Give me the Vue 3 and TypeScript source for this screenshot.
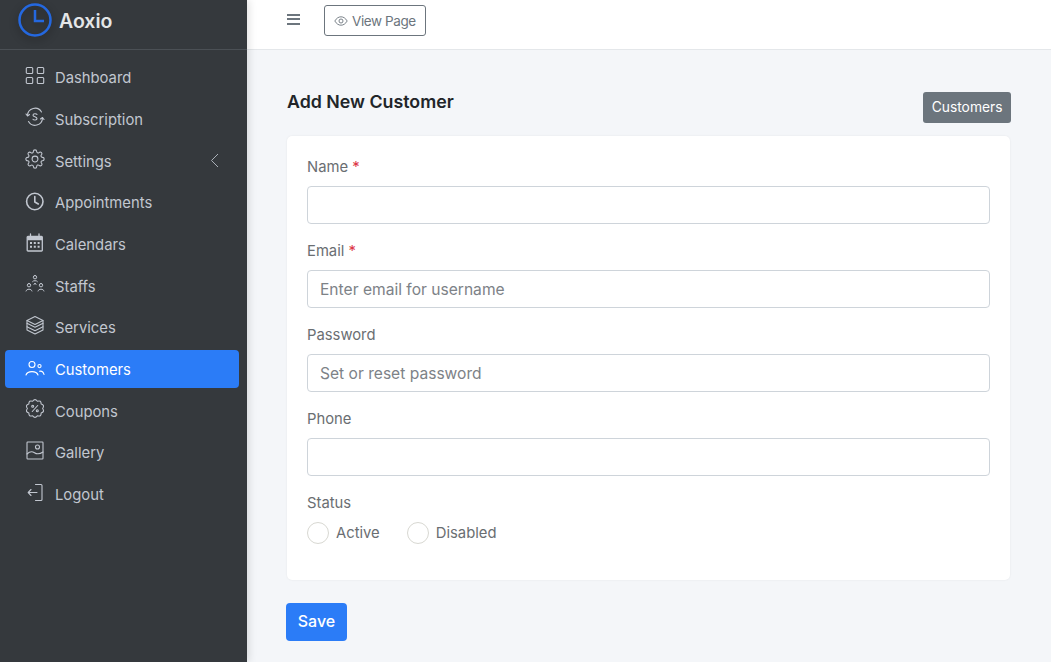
<template>
  <div class="layout">
    <aside class="sidebar">
      <div class="brand">
        <svg class="logo" width="36" height="36" viewBox="0 0 36 36" fill="none">
          <circle cx="18" cy="18" r="15.500" stroke="#2468e0" stroke-width="2.500" />
          <path d="M18 8v11h9" stroke="#2468e0" stroke-width="2.500" />
        </svg>
        <span class="brand_name">Aoxio</span>
      </div>
      <nav class="menu">
        <a v-for="item in menu" :key="item.name" class="menu_item" :class="{ active: item.name === 'Customers' }">
          <svg class="menu_icon" width="20" height="20" :viewBox="item.vb || '0 0 20 20'" fill="none" stroke="currentColor" :stroke-width="item.sw || 1.100" stroke-linecap="round" stroke-linejoin="round">
            <path v-for="(d, i) in item.icon" :key="i" :d="d" />
            <path v-if="item.solid" :d="item.solid" fill="currentColor" stroke="none" />
          </svg>
          <span class="menu_label">{{ item.name }}</span>
          <svg v-if="item.arrow" class="arrow" width="9" height="15" viewBox="0 0 9 15" fill="none" stroke="currentColor" stroke-width="1">
            <path d="M8 1 1.500 7.500 8 14" />
          </svg>
        </a>
      </nav>
    </aside>
    <div class="right">
      <header class="topbar">
        <button class="burger" aria-label="menu"><span></span><span></span><span></span></button>
        <a class="view_page">
          <svg width="14" height="10" viewBox="0 0 14 10" fill="none" stroke="currentColor" stroke-width="0.9">
            <path d="M.8 5C2.500 2.200 4.600.8 7 .8S11.500 2.200 13.200 5C11.500 7.800 9.400 9.200 7 9.200S2.500 7.800.8 5Z" />
            <circle cx="7" cy="5" r="2" />
          </svg>
          View Page
        </a>
      </header>
      <main class="content">
        <div class="page_head">
          <h1>Add New Customer</h1>
          <a class="back_btn">Customers</a>
        </div>
        <form class="card" @submit.prevent>
          <div v-for="f in fields" :key="f.label" class="field">
            <label>{{ f.label }} <em v-if="f.required">*</em></label>
            <input type="text" :placeholder="f.placeholder" />
          </div>
          <div class="status">
            <label>Status</label>
            <div class="radios">
              <span class="radio"><i></i>Active</span>
              <span class="radio"><i></i>Disabled</span>
            </div>
          </div>
        </form>
        <button class="save">Save</button>
      </main>
    </div>
  </div>
</template>

<script setup lang="ts">
interface MenuItem {
  name: string;
  icon: string[];
  solid?: string;
  vb?: string;
  sw?: number;
  arrow?: boolean;
}

// scalloped outline of the coupon badge
const badge = (() => {
  const n = 10;
  const point = (r: number, a: number) => `${(10 + r * Math.cos(a)).toFixed(2)} ${(9.5 + r * Math.sin(a)).toFixed(2)}`;
  let d = `M${point(7.6, 0)}`;
  for (let i = 0; i < n; i++) {
    const step = (Math.PI * 2) / n;
    d += `Q${point(10.6, (i + 0.5) * step)} ${point(7.6, (i + 1) * step)}`;
  }
  return d + "Z";
})();

const menu: MenuItem[] = [
  {
    name: "Dashboard",
    icon: [
      "M2.300 1.500h4.400a1 1 0 0 1 1 1v4a1 1 0 0 1-1 1H2.300a1 1 0 0 1-1-1v-4a1 1 0 0 1 1-1Z",
      "M13.300 1.500h4.400a1 1 0 0 1 1 1v4a1 1 0 0 1-1 1h-4.400a1 1 0 0 1-1-1v-4a1 1 0 0 1 1-1Z",
      "M2.300 11.500h4.400a1 1 0 0 1 1 1v4a1 1 0 0 1-1 1H2.300a1 1 0 0 1-1-1v-4a1 1 0 0 1 1-1Z",
      "M13.300 11.500h4.400a1 1 0 0 1 1 1v4a1 1 0 0 1-1 1h-4.400a1 1 0 0 1-1-1v-4a1 1 0 0 1 1-1Z",
    ],
  },
  {
    name: "Subscription",
    icon: [
      "M2.500 8.500A7.500 7.500 0 0 1 16.500 5",
      "M17.500 11A7.500 7.500 0 0 1 3.500 14.500",
      "M1 7 2.500 9 4.500 7.500",
      "M19 12.500 17.500 10.500 15.500 12",
      "M12 7.500C11.500 6.500 8 6.300 8 8.200c0 2 4 1.300 4 3.500 0 1.800-3.500 1.600-4 .5",
    ],
  },
  {
    name: "Settings",
    arrow: true,
    vb: "0 0 24 24",
    sw: 1.300,
    icon: [
      "M12 8.500a3.500 3.500 0 1 0 0 7 3.500 3.500 0 0 0 0-7Z",
      "M19.400 15a1.650 1.650 0 0 0 .33 1.820l.06.06a2 2 0 0 1 0 2.830 2 2 0 0 1-2.830 0l-.06-.06a1.650 1.650 0 0 0-1.820-.33 1.650 1.650 0 0 0-1 1.510V21a2 2 0 0 1-2 2 2 2 0 0 1-2-2v-.09A1.650 1.650 0 0 0 9 19.400a1.650 1.650 0 0 0-1.820.33l-.06.06a2 2 0 0 1-2.830 0 2 2 0 0 1 0-2.830l.06-.06a1.650 1.650 0 0 0 .33-1.820 1.650 1.650 0 0 0-1.510-1H3a2 2 0 0 1-2-2 2 2 0 0 1 2-2h.09A1.650 1.650 0 0 0 4.600 9a1.650 1.650 0 0 0-.33-1.820l-.06-.06a2 2 0 0 1 0-2.830 2 2 0 0 1 2.830 0l.06.06a1.650 1.650 0 0 0 1.820.33H9a1.650 1.650 0 0 0 1-1.510V3a2 2 0 0 1 2-2 2 2 0 0 1 2 2v.09a1.650 1.650 0 0 0 1 1.510 1.650 1.650 0 0 0 1.820-.33l.06-.06a2 2 0 0 1 2.830 0 2 2 0 0 1 0 2.830l-.06.06a1.650 1.650 0 0 0-.33 1.820V9a1.650 1.650 0 0 0 1.510 1H21a2 2 0 0 1 2 2 2 2 0 0 1-2 2h-.09a1.650 1.650 0 0 0-1.510 1z",
    ],
  },
  {
    name: "Appointments",
    sw: 1.600,
    icon: ["M9.800 2.300a8.200 8.200 0 1 0 0 16.400 8.200 8.200 0 0 0 0-16.400Z", "M9.800 5.500V11L13.300 13"],
  },
  {
    name: "Calendars",
    sw: 1.300,
    icon: ["M3 3.500h13.500a.8.8 0 0 1 .8.8v12.900a.8.8 0 0 1-.8.8H3a.8.8 0 0 1-.8-.8V4.300a.8.8 0 0 1 .8-.8Z", "M5.500 1v2.500M14 1v2.500"],
    solid:
      "M2.200 3.500h15v3.700h-15ZM5 9h2v2H5ZM8.800 9h2v2h-2ZM12.600 9h2v2h-2ZM5 12.700h2v2H5ZM8.800 12.700h2v2h-2ZM12.600 12.700h2v2h-2Z",
  },
  {
    name: "Staffs",
    sw: 1,
    icon: [
      "M10 1.500a1.700 1.700 0 1 0 0 3.400 1.700 1.700 0 0 0 0-3.400Z",
      "M4 9.500a1.700 1.700 0 1 0 0 3.400A1.700 1.700 0 0 0 4 9.500Z",
      "M16 9.500a1.700 1.700 0 1 0 0 3.400 1.700 1.700 0 0 0 0-3.400Z",
      "M7.500 7.500C8 6.300 12 6.300 12.500 7.500",
      "M1 17c.5-2.500 5.500-2.500 6 0M13 17c.5-2.500 5.500-2.500 6 0M9 10.500l1-1.500 1 1.500",
    ],
  },
  {
    name: "Services",
    icon: [
      "M10 .5 18 4.500 10 8.500 2 4.500Z",
      "M2 4.500v2.800l8 4 8-4V4.500",
      "M2 7.300v3.500l8 4 8-4V7.300",
      "M2 10.800v3.200l8 4 8-4v-3.200",
    ],
  },
  {
    name: "Customers",
    icon: [
      "M7 3.500a3 3 0 1 0 0 6 3 3 0 0 0 0-6Z",
      "M1 17c1.500-4.500 10.500-4.500 12 0",
      "M14.500 6.500a1.600 1.600 0 1 0 0 3.200 1.600 1.600 0 0 0 0-3.200Z",
      "M14.500 13.200c2-.3 4 1 4.500 3.300",
    ],
  },
  {
    name: "Coupons",
    icon: [badge, "M7.300 12.500l5.400-6", "M7.700 6.300a1 1 0 1 0 0 2 1 1 0 0 0 0-2ZM12.300 10.700a1 1 0 1 0 0 2 1 1 0 0 0 0-2Z"],
  },
  {
    name: "Gallery",
    icon: [
      "M2.700 1h14.600a.7.7 0 0 1 .7.7v15.600a.7.7 0 0 1-.7.7H2.700a.7.7 0 0 1-.7-.7V1.700A.7.7 0 0 1 2.700 1Z",
      "M12.500 4a2 2 0 1 0 0 4 2 2 0 0 0 0-4Z",
      "M2 13c3-3 5-3 7.500-1.300s5.500 1.300 8.500-.7",
    ],
  },
  {
    name: "Logout",
    icon: [
      "M10.500 1.500H16a1 1 0 0 1 1 1v14a1 1 0 0 1-1 1h-5.500",
      "M12 9.500H3.200M6 6.500 3.200 9.500 6 12.500",
    ],
  },
];

const fields = [
  { label: "Name", required: true, placeholder: "" },
  { label: "Email", required: true, placeholder: "Enter email for username" },
  { label: "Password", required: false, placeholder: "Set or reset password" },
  { label: "Phone", required: false, placeholder: "" },
];
</script>

<style>
html,
body {
  margin: 0;
  overflow: hidden;
}
</style>

<style scoped>
.layout {
  display: flex;
  height: 662px;
  font-family: Inter, "Liberation Sans", sans-serif;
  font-size: 14.8px;
  color: #6a6e72;
  background: #f4f6f9;
}
.sidebar {
  width: 247px;
  flex-shrink: 0;
  background: #35393d;
  box-shadow: 2px 0 8px rgba(0, 0, 0, 0.12);
  z-index: 1;
}
.brand {
  display: flex;
  align-items: center;
  gap: 6px;
  padding: 0 0 9px 17px;
  box-sizing: border-box;
  border-bottom: 1px solid #4b5055;
  height: 50px;
}
.logo {
  filter: drop-shadow(0 3px 4px rgba(0, 0, 0, 0.4));
}
.brand_name {
  font-size: 19.500px;
  font-weight: 600;
  color: #e4e6e8;
  margin-top: 2px;
}
.menu {
  display: flex;
  flex-direction: column;
  gap: 3.200px;
  padding: 8px 8px 0 5px;
}
.menu_item {
  display: flex;
  align-items: center;
  height: 38.500px;
  padding: 0 20px;
  border-radius: 4px;
  color: #c2c7d0;
}
.menu_item.active {
  background: #2b7cf7;
  color: #fff;
}
.menu_icon {
  flex-shrink: 0;
  margin-top: -3px;
}
.menu_label {
  margin-left: 10px;
  padding-top: 2px;
  flex: 1;
}
.arrow {
  color: #aab0b8;
}
.right {
  flex: 1;
  min-width: 0;
}
.topbar {
  display: flex;
  align-items: center;
  height: 50px;
  box-sizing: border-box;
  padding: 0 0 8px 40px;
  background: #fff;
  border-bottom: 1px solid #e4e7ea;
  gap: 24px;
}
.burger {
  display: flex;
  flex-direction: column;
  gap: 2.500px;
  width: 13px;
  margin-top: -3px;
  padding: 0;
  border: 0;
  background: none;
}
.burger span {
  display: block;
  width: 13px;
  height: 2px;
  background: #6c757d;
}
.view_page {
  display: flex;
  align-items: center;
  gap: 4px;
  height: 31px;
  box-sizing: border-box;
  padding: 0 9px;
  border: 1px solid #6c757d;
  border-radius: 3px;
  font-size: 13.500px;
  letter-spacing: -0.4px;
  color: #6c757d;
  background: #fff;
}
.content {
  padding: 42px 40px 0 39px;
}
.page_head {
  display: flex;
  justify-content: space-between;
  align-items: flex-start;
  height: 44px;
  padding-left: 1px;
}
h1 {
  margin: 0;
  font-size: 17.800px;
  line-height: 20px;
  font-weight: 600;
  color: #212529;
}
.back_btn {
  display: block;
  height: 31px;
  line-height: 31px;
  padding: 0 8.500px;
  border-radius: 3px;
  font-size: 13.800px;
  color: #fff;
  background: #6c757d;
}
.card {
  margin: 0 1px;
  padding: 20px 20px 0 20px;
  height: 444px;
  box-sizing: border-box;
  background: #fff;
  border-radius: 5px;
  box-shadow: 0 0 2px rgba(0, 0, 0, 0.08);
}
.field {
  height: 84px;
}
label {
  display: block;
  height: 30px;
  line-height: 22px;
}
em {
  font-style: normal;
  color: #dc3545;
}
input {
  display: block;
  width: 100%;
  height: 38px;
  box-sizing: border-box;
  padding: 0 12px;
  border: 1px solid #ced4da;
  border-radius: 4px;
  font: inherit;
  font-size: 15.600px;
  outline: none;
}
input::placeholder {
  color: #7d8287;
}
.status label {
  height: 18px;
}
.radios {
  display: flex;
  gap: 27px;
  margin-top: 12px;
}
.radio {
  display: flex;
  align-items: center;
  gap: 7px;
}
.radio i {
  display: block;
  width: 22px;
  height: 22px;
  box-sizing: border-box;
  border: 1.500px solid #d8d8d2;
  border-radius: 50%;
}
.save {
  display: block;
  width: 61px;
  height: 38px;
  margin: 23px 0 0;
  padding: 0 0 2px;
  border: 0;
  border-radius: 4px;
  background: #2b7cf7;
  color: #fff;
  font: inherit;
  font-size: 16px;
  font-weight: 500;
}
</style>
